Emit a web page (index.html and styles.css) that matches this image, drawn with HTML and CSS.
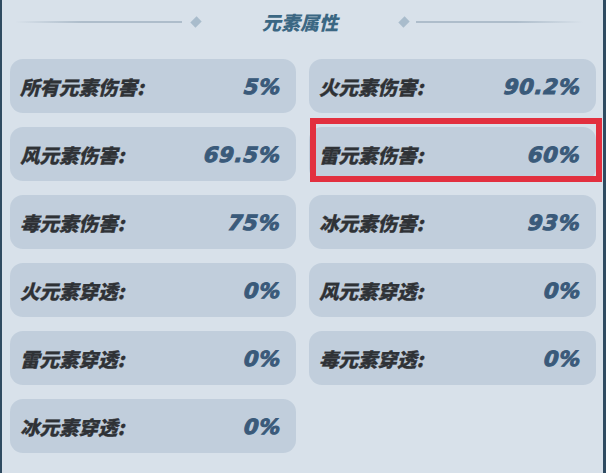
FILE: index.html
```html
<!DOCTYPE html>
<html lang="zh">
<head>
<meta charset="utf-8">
<link rel="stylesheet" href="styles.css">
</head>
<body>
<div class="panel">
  <div class="header">
    <span class="line line-left"></span>
    <span class="diamond diamond-left"></span>
    <span class="title">元素属性</span>
    <span class="diamond diamond-right"></span>
    <span class="line line-right"></span>
  </div>
  <div class="grid">
    <div class="card"><span class="label">所有元素伤害:</span><span class="value">5%</span></div>
    <div class="card"><span class="label">火元素伤害:</span><span class="value">90.2%</span></div>
    <div class="card"><span class="label">风元素伤害:</span><span class="value">69.5%</span></div>
    <div class="card"><span class="label">雷元素伤害:</span><span class="value">60%</span><span class="mark"></span></div>
    <div class="card"><span class="label">毒元素伤害:</span><span class="value">75%</span></div>
    <div class="card"><span class="label">冰元素伤害:</span><span class="value">93%</span></div>
    <div class="card"><span class="label">火元素穿透:</span><span class="value">0%</span></div>
    <div class="card"><span class="label">风元素穿透:</span><span class="value">0%</span></div>
    <div class="card"><span class="label">雷元素穿透:</span><span class="value">0%</span></div>
    <div class="card"><span class="label">毒元素穿透:</span><span class="value">0%</span></div>
    <div class="card"><span class="label">冰元素穿透:</span><span class="value">0%</span></div>
  </div>
</div>
</body>
</html>
```

FILE: styles.css
```css
html, body {
  margin: 0;
  padding: 0;
  background: #d8e1ea;
}
.panel {
  width: 606px;
  height: 473px;
  box-sizing: border-box;
  border-left: 2px solid #2f4b61;
  border-right: 3px solid #2f4b61;
  background: #d8e1ea;
  overflow: hidden;
}
.header {
  height: 42px;
  padding-top: 1px;
  box-sizing: border-box;
  display: flex;
  align-items: center;
  padding-left: 13px;
}
.line {
  display: block;
  height: 2px;
  width: 167px;
}
.line-left {
  background: linear-gradient(to right, rgba(176,191,206,0), #aebdcb 40%, #aebdcb);
}
.line-right {
  background: linear-gradient(to left, rgba(176,191,206,0), #aebdcb 40%, #aebdcb);
}
.diamond {
  width: 8px;
  height: 8px;
  background: #a9bccc;
  transform: rotate(45deg) scale(0.9, 1.1);
}
.diamond-left { margin: 0 0 0 10px; }
.diamond-right { margin: 0 8px 0 0; }
.title {
  font-family: "Noto Sans CJK SC", sans-serif;
  font-weight: 900;
  font-style: italic;
  font-size: 19px;
  color: #3b6783;
  margin: 0 62px 0 62px;
}
.grid {
  display: grid;
  grid-template-columns: 286px 287px;
  column-gap: 13px;
  row-gap: 14px;
  padding: 17px 0 0 8px;
}
.card {
  position: relative;
  height: 54px;
  border-radius: 13px;
  background: #c1cedc;
  display: flex;
  align-items: center;
  justify-content: space-between;
  padding: 0 15px 0 10px;
}
.label {
  font-family: "Noto Sans CJK SC", sans-serif;
  font-weight: 900;
  font-style: italic;
  font-size: 19.5px;
  color: #2f3236;
  -webkit-text-stroke: 0.3px #2f3236;
}
.value {
  display: inline-block;
  font-family: "DejaVu Sans", sans-serif;
  font-weight: 700;
  font-style: italic;
  font-size: 21px;
  letter-spacing: 0.8px;
  color: #3a5a7a;
  -webkit-text-stroke: 1px #3a5a7a;
  margin-top: 2px;
  transform: skewX(-5deg);
}
.mark {
  position: absolute;
  left: 1px;
  top: -9px;
  width: 292px;
  height: 64px;
  box-sizing: border-box;
  border: 6px solid #e2303f;
  pointer-events: none;
}
```
